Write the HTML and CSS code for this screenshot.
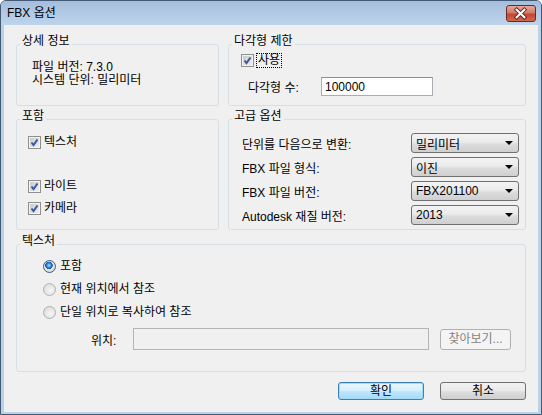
FILE: index.html
```html
<!DOCTYPE html>
<html lang="ko">
<head>
    <meta charset="UTF-8">
    <title>FBX 옵션</title>
    <link rel="stylesheet" href="styles.css">
</head>
<body>
    <div class="window">
        <div class="titlebar">
            <span class="title">FBX 옵션</span>
            <button class="close-btn" title="닫기">
                <svg width="30" height="17" viewBox="0 0 30 17">
                    <path d="M11 4.5 L19 12.5 M19 4.5 L11 12.5" stroke="#5a1f18" stroke-width="4" stroke-linecap="square" fill="none"/>
                    <path d="M11 4.5 L19 12.5 M19 4.5 L11 12.5" stroke="#fff" stroke-width="2.2" stroke-linecap="square" fill="none"/>
                </svg>
            </button>
        </div>

        <div class="client">
            <div class="groups">
                <!-- 상세 정보 -->
                <div class="group info">
                    <div class="group-title">상세 정보</div>
                    <div class="info-lines">
                        <div>파일 버전: 7.3.0</div>
                        <div>시스템 단위: 밀리미터</div>
                    </div>
                </div>

                <!-- 다각형 제한 -->
                <div class="group poly">
                    <div class="group-title">다각형 제한</div>
                    <label class="check-row">
                        <span class="checkbox checked"></span>
                        <span class="focus">사용</span>
                    </label>
                    <div class="poly-row">
                        <span class="poly-label">다각형 수:</span>
                        <input class="textbox" type="text" value="100000">
                    </div>
                </div>

                <!-- 포함 -->
                <div class="group include">
                    <div class="group-title">포함</div>
                    <div class="check-list">
                        <label class="check-row"><span class="checkbox checked"></span>텍스처</label>
                        <div class="check-row"></div>
                        <label class="check-row"><span class="checkbox checked"></span>라이트</label>
                        <label class="check-row"><span class="checkbox checked"></span>카메라</label>
                    </div>
                </div>

                <!-- 고급 옵션 -->
                <div class="group advanced">
                    <div class="group-title">고급 옵션</div>
                    <div class="option-list">
                        <div class="option-row">
                            <span>단위를 다음으로 변환:</span>
                            <div class="select"><span>밀리미터</span><span class="arrow"></span></div>
                        </div>
                        <div class="option-row">
                            <span>FBX 파일 형식:</span>
                            <div class="select"><span>이진</span><span class="arrow"></span></div>
                        </div>
                        <div class="option-row">
                            <span>FBX 파일 버전:</span>
                            <div class="select"><span>FBX201100</span><span class="arrow"></span></div>
                        </div>
                        <div class="option-row">
                            <span>Autodesk 재질 버전:</span>
                            <div class="select"><span>2013</span><span class="arrow"></span></div>
                        </div>
                    </div>
                </div>

                <!-- 텍스처 -->
                <div class="group texture">
                    <div class="group-title">텍스처</div>
                    <div class="radio-list">
                        <label class="radio-row"><span class="radio selected"></span>포함</label>
                        <label class="radio-row"><span class="radio"></span>현재 위치에서 참조</label>
                        <label class="radio-row"><span class="radio"></span>단일 위치로 복사하여 참조</label>
                    </div>
                    <div class="location-row">
                        <span class="location-label">위치:</span>
                        <input class="textbox location" type="text" disabled>
                        <button class="btn browse" disabled>찾아보기...</button>
                    </div>
                </div>
            </div>

            <div class="actions">
                <button class="btn default">확인</button>
                <button class="btn">취소</button>
            </div>
        </div>
    </div>
</body>
</html>
```

FILE: styles.css
```css
/* 기본 */
body {
    margin: 0;
    font-family: "Liberation Sans", "Noto Sans CJK KR", sans-serif;
    font-size: 12px;
    color: #000;
    background: #fff;
}

/* 창 프레임 */
.window {
    width: 542px;
    height: 415px;
    box-sizing: border-box;
    border: 1px solid #435a74;
    border-radius: 6px 6px 0 0;
    background: #bcd2ea;
    display: flex;
    flex-direction: column;
}

.titlebar {
    height: 24px;
    flex: none;
    display: flex;
    align-items: flex-start;
    justify-content: space-between;
    padding-left: 6px;
    border-radius: 5px 5px 0 0;
    background: linear-gradient(#a4bedc, #b4cbe6 60%, #bed4ec);
}

.title {
    line-height: 25px;
    font-size: 12px;
}

.close-btn {
    width: 30px;
    height: 17px;
    margin: 4px 5px 0 0;
    padding: 0;
    border: 1px solid #6b2a22;
    border-radius: 3px;
    background: linear-gradient(#e6a99c, #d27a68 45%, #c24733 55%, #cf6a4f);
    display: flex;
    align-items: center;
    justify-content: center;
    box-sizing: border-box;
}

.close-btn svg {
    display: block;
    margin-left: -1px;
}

/* 클라이언트 영역 */
.client {
    flex: 1;
    margin: 0 3px 2px 3px;
    background: #f0f0f0;
    padding: 19px 12px 0 12px;
}

.groups {
    display: grid;
    grid-template-columns: 203px 298px;
    grid-template-rows: 62px 111px 129px;
    column-gap: 9px;
    row-gap: 13px;
}

.group {
    border: 1px solid #d5dfe5;
    border-radius: 3px;
    box-sizing: border-box;
}

.group-title {
    display: table;
    margin: -10px 0 0 3px;
    padding: 0 2px;
    line-height: 13px;
    background: #f0f0f0;
}

/* 상세 정보 */
.info-lines {
    margin: 13px 0 0 15px;
    line-height: 13px;
}

/* 체크박스 */
.checkbox {
    width: 13px;
    height: 13px;
    box-sizing: border-box;
    border: 1px solid #8e8f8f;
    background: linear-gradient(135deg, #cbcbcb, #f4f4f4);
    box-shadow: inset 0 0 0 1px #f4f4f4;
    display: inline-block;
    flex: none;
}

.checkbox.checked {
    background-image:
        url("data:image/svg+xml,%3Csvg xmlns='http://www.w3.org/2000/svg' width='11' height='11'%3E%3Cpath d='M2.5 5.5 L4.5 8 L8.5 2.5' stroke='%233a57a0' stroke-width='2' fill='none'/%3E%3C/svg%3E"),
        linear-gradient(135deg, #c7c7c7, #f2f2f2);
    background-repeat: no-repeat;
    background-position: center;
}

.check-row {
    display: flex;
    align-items: center;
    gap: 3px;
    height: 13px;
    line-height: 13px;
}

.focus {
    outline: 1px dotted #000;
    outline-offset: 0;
    padding: 0 1px;
}

/* 다각형 제한 */
.poly .check-row {
    margin: 6px 0 0 12px;
}

.poly-row {
    display: flex;
    align-items: center;
    margin: 10px 0 0 19px;
}

.poly-label {
    width: 73px;
}

.textbox {
    width: 112px;
    height: 19px;
    box-sizing: border-box;
    border: 1px solid #abadb3;
    border-top-color: #8e8f8f;
    padding: 0 3px;
    font: inherit;
    background: #fff;
}

/* 포함 */
.check-list {
    margin: 13px 0 0 11px;
    display: flex;
    flex-direction: column;
    gap: 9px;
}

/* 고급 옵션 */
.option-list {
    margin: 10px 6px 0 13px;
    display: flex;
    flex-direction: column;
    gap: 4px;
}

.option-row {
    display: flex;
    align-items: center;
    justify-content: space-between;
    height: 20px;
}

.select {
    width: 108px;
    height: 20px;
    box-sizing: border-box;
    border: 1px solid #707070;
    border-radius: 3px;
    background: linear-gradient(#f2f2f2, #ebebeb 45%, #dddddd 55%, #cfcfcf);
    display: flex;
    align-items: center;
    justify-content: space-between;
    padding: 0 5px 0 4px;
}

.arrow {
    width: 0;
    height: 0;
    border-left: 4px solid transparent;
    border-right: 4px solid transparent;
    border-top: 4px solid #000;
}

/* 텍스처 */
.texture {
    grid-column: 1 / 3;
    margin-top: 1px;
}

.radio-list {
    margin: 12px 0 0 26px;
    display: flex;
    flex-direction: column;
    gap: 10px;
}

.radio-row {
    display: flex;
    align-items: center;
    gap: 4px;
    height: 13px;
    line-height: 13px;
}

.radio {
    width: 13px;
    height: 13px;
    box-sizing: border-box;
    border-radius: 50%;
    border: 1px solid #b0b0b0;
    background: radial-gradient(circle at 60% 60%, #f6f6f6, #d6d6d6);
    flex: none;
}

.radio.selected {
    border-color: #3c5f7f;
    background: radial-gradient(circle at 45% 40%, #bfe2ff 0, #3b8fe0 2px, #0e4fa5 3.5px, #e8e8e8 4px, #cfcfcf);
}

.location-row {
    margin: 9px 0 0 74px;
    display: flex;
    align-items: center;
}

.location-label {
    width: 42px;
}

.textbox.location {
    width: 296px;
    height: 22px;
    background: #f0f0f0;
    border-color: #b5b5b5;
}

/* 버튼 */
.btn {
    width: 86px;
    height: 18px;
    padding: 0;
    box-sizing: border-box;
    border: 1px solid #707070;
    border-radius: 3px;
    background: linear-gradient(#f2f2f2, #ebebeb 45%, #dddddd 55%, #cfcfcf);
    font: inherit;
    line-height: 16px;
    color: #000;
}

.btn.default {
    border-color: #3c7fb1;
    background: linear-gradient(#eaf6fd, #d9f0fc 45%, #bee6fd 55%, #a7d9f5);
    box-shadow: inset 0 0 0 1px #9fdcf9;
}

.btn.browse {
    width: 71px;
    height: 21px;
    margin-left: 11px;
    border-color: #adb2b5;
    background: #f4f4f4;
    color: #838383;
}

.actions {
    margin-top: 10px;
    display: flex;
    justify-content: flex-end;
    gap: 16px;
}
```
